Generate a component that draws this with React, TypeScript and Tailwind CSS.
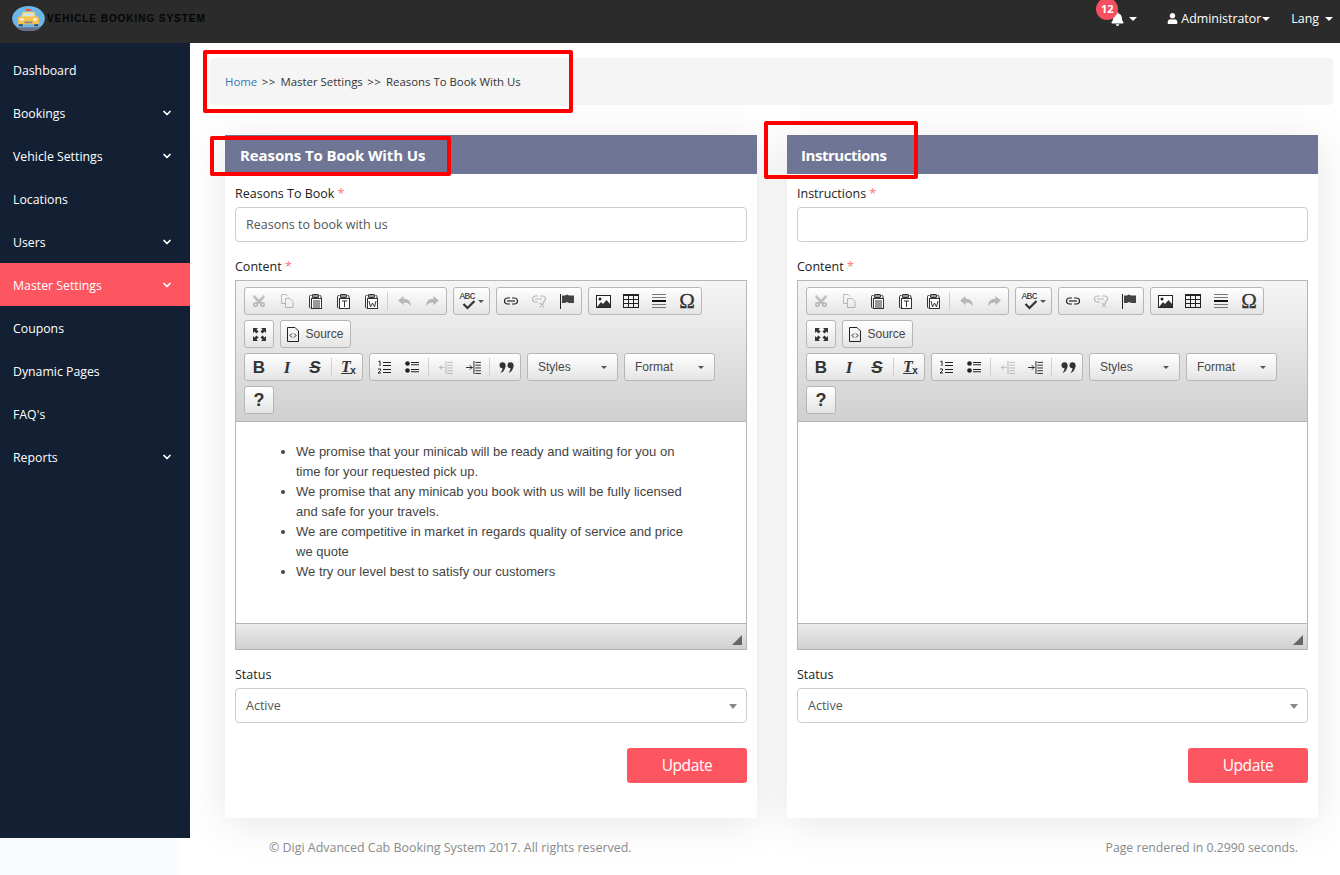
import { ChevronDown } from 'lucide-react'
import { FaBell, FaUser, FaCut } from 'react-icons/fa'
import React from 'react'

const menu = [
  { name: 'Dashboard' },
  { name: 'Bookings', sub: true },
  { name: 'Vehicle Settings', sub: true },
  { name: 'Locations' },
  { name: 'Users', sub: true },
  { name: 'Master Settings', sub: true, active: true },
  { name: 'Coupons' },
  { name: 'Dynamic Pages' },
  { name: "FAQ's" },
  { name: 'Reports', sub: true },
]

function Caret() {
  return <span className="inline-block w-0 h-0 border-x-[4px] border-x-transparent border-t-[4px] border-t-white" />
}

function TaxiLogo() {
  return (
    <svg width="33" height="25" viewBox="0 0 34 26">
      <ellipse cx="17" cy="13" rx="17" ry="13" fill="#6db7e8" />
      <path d="M4 22 a17 13 0 0 0 26 0 z" fill="#6b6f8c" />
      <rect x="14" y="3" width="6" height="2" fill="#e2574c" />
      <path d="M9 12 L11 6 H23 L25 12 Z" fill="#f8d26a" />
      <path d="M11 11 L12.5 7.5 H21.5 L23 11 Z" fill="#cfe6f2" />
      <rect x="6" y="11" width="22" height="8" rx="2" fill="#f6c350" />
      <rect x="8" y="13" width="4" height="2" fill="#fff" />
      <rect x="22" y="13" width="4" height="2" fill="#fff" />
      <rect x="13" y="16" width="8" height="2" fill="#8a8a8a" />
      <rect x="7" y="19" width="4" height="2" fill="#444" />
      <rect x="23" y="19" width="4" height="2" fill="#444" />
    </svg>
  )
}

function Header() {
  return (
    <header className="h-[43px] bg-[#2b2b2b] flex items-center text-white text-[12.4px]">
      <div className="ml-[12px] -mt-[6px] flex items-center">
        <TaxiLogo />
        <span className="ml-[2px] font-['Liberation_Sans',sans-serif] font-bold text-[10px] tracking-[0.95px] text-[#050505]">
          VEHICLE BOOKING SYSTEM
        </span>
      </div>
      <div className="ml-auto flex items-center -mt-[5px]">
        <div className="relative flex items-center gap-[5px] mr-[30px]">
          <FaBell className="w-[13px] h-[14px] mt-[1px] text-white" />
          <Caret />
          <span className="absolute -left-[15px] -top-[13px] w-[22px] h-[22px] rounded-full bg-[#f4505f] text-white text-[11px] font-bold flex items-center justify-center">
            12
          </span>
        </div>
        <FaUser className="w-[11px] h-[11px] mr-[3px]" />
        <span>Administrator</span>
        <span className="ml-[1px] mr-[21px] flex"><Caret /></span>
        <span>Lang</span>
        <span className="ml-[6px] mr-[7px] flex"><Caret /></span>
      </div>
    </header>
  )
}

function Sidebar() {
  return (
    <div className="w-[190px] shrink-0">
      <aside className="h-[795px] bg-[#131f33] text-white text-[12.3px] pt-[5px]">
        {menu.map((m) => (
          <div key={m.name} className={`h-[43px] flex items-center pl-[13px] pr-[17px] pt-[4px] justify-between ${m.active ? 'bg-[#fd5660]' : ''}`}>
            <span>{m.name}</span>
            {m.sub && <ChevronDown className="w-[12px] h-[12px] -mt-[3px]" strokeWidth={3.5} />}
          </div>
        ))}
      </aside>
      <div className="w-[180px] h-[37px] bg-[#fafbff]" />
    </div>
  )
}

const G = 'flex items-center h-[28px] border border-[#b6b6b6] rounded-[3px] bg-gradient-to-b from-white to-[#e4e4e4]'

function Btn({ children, dim }: { children: React.ReactNode; dim?: boolean }) {
  return <span className={`w-[28px] h-[26px] flex items-center justify-center text-[#474747] ${dim ? 'opacity-30' : ''}`}>{children}</span>
}

function Sep() {
  return <span className="w-px h-[18px] mx-[2px] bg-[#cfcfcf]" />
}

function Clip({ letter }: { letter: 'lines' | 'T' | 'W' }) {
  return (
    <svg width="13" height="15" viewBox="0 0 13 15" fill="none" stroke="#333" strokeWidth="1">
      <path d="M2.5 1.5 H1.5 a1 1 0 0 0 -1 1 V13 a1 1 0 0 0 1 1 M10.5 1.5 H11 a1 1 0 0 1 1 1 V4" />
      <rect x="3.5" y=".5" width="6" height="3" rx=".5" fill="#999" />
      <rect x="2.5" y="4.5" width="10" height="10" fill="#fff" />
      {letter === 'lines' && <path d="M4 7 H11 M4 9 H11 M4 11 H11 M4 13 H11" />}
      {letter === 'T' && <path d="M5 7 H10 M7.5 7 V13" />}
      {letter === 'W' && <path d="M4 7 L5.5 13 L7.5 9 L9.5 13 L11 7" />}
    </svg>
  )
}

function Toolbar() {
  return (
    <div className="bg-gradient-to-b from-[#f5f5f5] to-[#cfd1cf] h-[141px] border-b border-[#b6b6b6] pl-[8px] pt-[6px] flex flex-col gap-[5px]">
      <div className="flex gap-[6px]">
        <div className={`${G} w-[203px]`}>
          <Btn dim><FaCut className="w-[14px] h-[14px] -rotate-90" /></Btn>
          <Btn dim>
            <svg width="14" height="16" viewBox="0 0 14 16" fill="none" stroke="#333"><path d="M1.5 1.5 H6 L8 3.5 M1.5 1.5 V10.5 H5" /><path d="M5.5 5.5 H10 L13 8.5 V14.5 H5.5 Z" /></svg>
          </Btn>
          <Btn><Clip letter="lines" /></Btn>
          <Btn><Clip letter="T" /></Btn>
          <Btn><Clip letter="W" /></Btn>
          <Sep />
          <Btn dim>
            <svg width="15" height="11" viewBox="0 0 16 12" fill="#333"><path d="M1 5 L7 0 V3 C12 3 15 6 15 11 C13 8 11 7 7 7 V10 Z" /></svg>
          </Btn>
          <Btn dim>
            <svg width="15" height="11" viewBox="0 0 16 12" fill="#333"><path d="M15 5 L9 0 V3 C4 3 1 6 1 11 C3 8 5 7 9 7 V10 Z" /></svg>
          </Btn>
        </div>
        <div className={`${G} w-[37px] justify-center gap-[2px]`}>
          <span className="relative w-[16px] h-[18px] block">
            <span className="absolute left-0 -top-[2px] text-[9.5px] font-['Liberation_Mono',monospace] text-[#222] tracking-[-0.6px]">ABC</span>
            <svg className="absolute left-[2px] top-[8px]" width="14" height="10" viewBox="0 0 14 10" fill="none" stroke="#333" strokeWidth="2.2"><path d="M1.5 4 L5.5 8 L12.5 1" /></svg>
          </span>
          <span className="w-0 h-0 border-x-[3px] border-x-transparent border-t-[3px] border-t-[#555]" />
        </div>
        <div className={`${G} w-[86px]`}>
          <Btn>
            <svg width="14" height="8" viewBox="0 0 14 8" fill="none" stroke="#222" strokeWidth="1.2"><path d="M6 1 H3.5 a3 3 0 0 0 0 6 H6 M8 1 H10.5 a3 3 0 0 1 0 6 H8" /><path d="M3 4 H11" /></svg>
          </Btn>
          <Btn dim>
            <svg width="15" height="13" viewBox="0 0 15 13" fill="none" stroke="#333" strokeWidth="1.2"><path d="M6 1 H3.5 a3 3 0 0 0 0 6 H6 M8 1 H10.5 a3 3 0 0 1 0 6 M3 4 H10 M8 8 L12 12 M12 8 L8 12" /></svg>
          </Btn>
          <Btn>
            <svg width="14" height="15" viewBox="0 0 14 15"><path d="M.5 0 V15" stroke="#222" /><path d="M2 1.5 H5 L7 .5 L9 1.5 H14 V9 H9 L7 8 L5 9 H2 Z" fill="#444" /></svg>
          </Btn>
        </div>
        <div className={`${G} w-[114px]`}>
          <Btn>
            <svg width="15" height="13" viewBox="0 0 15 13"><rect x=".5" y=".5" width="14" height="12" fill="#fff" stroke="#222" /><circle cx="4" cy="4" r="1.5" fill="#222" /><path d="M1 12 L5 7 L7 9 L10.5 5 L14 9 V12 Z" fill="#333" /></svg>
          </Btn>
          <Btn>
            <svg width="16" height="14" viewBox="0 0 16 14" fill="none" stroke="#222"><rect x=".5" y=".5" width="15" height="13" /><path d="M.5 1.5 H15.5 M.5 5.5 H15.5 M.5 9.5 H15.5 M5.5 2 V14 M10.5 2 V14" /></svg>
          </Btn>
          <Btn>
            <svg width="14" height="16" viewBox="0 0 14 16" stroke="#777"><path d="M0 1.5 H14 M0 4.5 H14 M0 11.5 H14 M0 14.5 H14" /><path d="M0 8 H14" stroke="#111" strokeWidth="2" /></svg>
          </Btn>
          <Btn><span className="text-[21px] leading-none font-['Liberation_Serif',serif] text-[#333] [-webkit-text-stroke:0.3px_#333]">Ω</span></Btn>
        </div>
      </div>
      <div className="flex gap-[6px]">
        <div className={`${G} w-[30px] justify-center`}>
          <svg width="15" height="15" viewBox="0 0 15 15" fill="#333"><path d="M1 1 H6 L4.5 2.5 L6.5 4.5 L4.5 6.5 L2.5 4.5 L1 6 Z M14 1 V6 L12.5 4.5 L10.5 6.5 L8.5 4.5 L10.5 2.5 L9 1 Z M1 14 V9 L2.5 10.5 L4.5 8.5 L6.5 10.5 L4.5 12.5 L6 14 Z M14 14 H9 L10.5 12.5 L8.5 10.5 L10.5 8.5 L12.5 10.5 L14 9 Z" /></svg>
        </div>
        <div className={`${G} w-[71px] justify-center gap-[6px]`}>
          <svg width="12" height="15" viewBox="0 0 12 15" fill="none" stroke="#222"><path d="M.5 .5 H8 L11.5 4 V14.5 H.5 Z" /><path d="M5 6.5 L3 8.5 L5 10.5 M7 6.5 L9 8.5 L7 10.5" /></svg>
          <span className="text-[12px] text-[#474747] font-['Liberation_Sans',sans-serif]">Source</span>
        </div>
      </div>
      <div className="flex gap-[6px]">
        <div className={`${G} w-[119px]`}>
          <Btn><span className="text-[17px] leading-none font-bold font-['Liberation_Sans',sans-serif] text-[#333]">B</span></Btn>
          <Btn><span className="text-[17px] leading-none italic font-bold font-['Liberation_Serif',serif] text-[#333]">I</span></Btn>
          <Btn><span className="text-[17px] leading-none italic font-bold line-through font-['Liberation_Sans',sans-serif] text-[#333]">S</span></Btn>
          <Sep />
          <Btn>
            <span className="relative -ml-[4px] text-[16px] leading-none italic font-bold font-['Liberation_Serif',serif] text-[#333] underline">T<span className="absolute -right-[5px] -bottom-[1px] text-[10px] not-italic font-['Liberation_Sans',sans-serif] inline-block">x</span></span>
          </Btn>
        </div>
        <div className={`${G} w-[152px]`}>
          <Btn>
            <svg width="14" height="14" viewBox="0 0 14 14" stroke="#222"><path d="M6 2.5 H14 M6 5.5 H14 M6 9.5 H14 M6 12.5 H14" /><path d="M1.5 1.5 L3 1 V6 M1 9 H3.5 V10.5 L1 13 H4" fill="none" /></svg>
          </Btn>
          <Btn>
            <svg width="14" height="12" viewBox="0 0 14 12" fill="#222"><circle cx="2.5" cy="2.5" r="2.3" /><circle cx="2.5" cy="9.5" r="2.3" /><path d="M6 1 H14 V2 H6 Z M6 3.2 H14 V4.2 H6 Z M6 8 H14 V9 H6 Z M6 10.2 H14 V11.2 H6 Z" /></svg>
          </Btn>
          <Sep />
          <Btn dim>
            <svg width="15" height="13" viewBox="0 0 16 14" stroke="#333"><path d="M8.5 0 V14 M10 1.5 H16 M10 4.5 H16 M10 7.5 H16 M10 10.5 H16 M10 13.5 H16 M1 7 H7 M4 4.5 L1.5 7 L4 9.5" fill="none" /></svg>
          </Btn>
          <Btn>
            <svg width="15" height="13" viewBox="0 0 16 14" stroke="#222"><path d="M8.5 0 V14 M10 1.5 H16 M10 4.5 H16 M10 7.5 H16 M10 10.5 H16 M10 13.5 H16 M0 7 H7 M4 4.5 L6.5 7 L4 9.5" fill="none" /></svg>
          </Btn>
          <Sep />
          <Btn>
            <svg width="15" height="11" viewBox="0 0 15 11" fill="#333"><circle cx="3.5" cy="3.2" r="3" /><path d="M6.5 3.2 C6.5 7 4.5 10 1.5 11 C3 9 3.5 7.5 3.5 6 Z" /><circle cx="11.5" cy="3.2" r="3" /><path d="M14.5 3.2 C14.5 7 12.5 10 9.5 11 C11 9 11.5 7.5 11.5 6 Z" /></svg>
          </Btn>
        </div>
        <div className={`${G} w-[91px] px-[10px] justify-between font-['Liberation_Sans',sans-serif] text-[12px] text-[#484848]`}>
          Styles
          <span className="w-0 h-0 border-x-[3px] border-x-transparent border-t-[3px] border-t-[#555]" />
        </div>
        <div className={`${G} w-[91px] px-[10px] justify-between font-['Liberation_Sans',sans-serif] text-[12px] text-[#484848]`}>
          Format
          <span className="w-0 h-0 border-x-[3px] border-x-transparent border-t-[3px] border-t-[#555]" />
        </div>
      </div>
      <div className="flex">
        <div className={`${G} w-[30px] justify-center`}>
          <span className="text-[18px] leading-none font-bold font-['Liberation_Sans',sans-serif] text-[#333]">?</span>
        </div>
      </div>
    </div>
  )
}

function Editor({ children }: { children?: React.ReactNode }) {
  return (
    <div className="border border-[#b6b6b6] h-[370px] flex flex-col">
      <Toolbar />
      <div className="h-[201px] bg-white font-['Liberation_Sans',sans-serif] text-[13px] leading-[20px] text-[#444]">{children}</div>
      <div className="flex-1 border-t border-[#b6b6b6] bg-gradient-to-b from-[#ebebeb] to-[#cfd1cf] relative">
        <span className="absolute right-[4px] bottom-[4px] w-0 h-0 border-l-[10px] border-l-transparent border-b-[10px] border-b-[#666]" />
      </div>
    </div>
  )
}

function Card({ title, titleClass, label, value, width, children }: { title: string; titleClass: string; label: string; value?: string; width: string; children?: React.ReactNode }) {
  return (
    <section className={`${width} h-[683px] bg-white shadow-[0_5px_40px_rgba(0,0,0,0.1)]`}>
      <h2 className={`h-[39px] bg-[#6f7595] text-white text-[15px] font-bold flex items-center pt-[1px] ${titleClass}`}>{title}</h2>
      <div className="px-[10px] text-[12.5px] text-[#222]">
        <label className="block mt-[10px] h-[23px] leading-[19px]">{label} <span className="text-[#f77]">*</span></label>
        <div className="h-[35px] border border-[#ccc] rounded-[4px] flex items-center px-[10px] pt-[2px] text-[#555]">{value}</div>
        <label className="block mt-[15px] h-[23px] leading-[19px]">Content <span className="text-[#f77]">*</span></label>
        <Editor>{children}</Editor>
        <label className="block mt-[15px] h-[23px] leading-[19px]">Status</label>
        <div className="h-[35px] border border-[#ccc] rounded-[4px] flex items-center justify-between pl-[10px] pr-[9px] pt-[1px] text-[#555]">
          Active
          <span className="w-0 h-0 border-x-[4px] border-x-transparent border-t-[5px] border-t-[#888]" />
        </div>
        <div className="flex justify-end mt-[25px]">
          <button className="w-[120px] h-[35px] pt-[1px] bg-[#fd5660] rounded-[3px] text-white text-[15.5px] tracking-[-0.4px]">Update</button>
        </div>
      </div>
    </section>
  )
}

export default function App() {
  return (
    <div className="relative w-[1340px] h-[875px] overflow-hidden bg-white font-['Open_Sans',sans-serif]">
      <Header />
      <div className="flex">
        <Sidebar />
        <main className="flex-1 min-w-0">
          <div className="ml-[20px] mr-[7px] mt-[15px] h-[47px] bg-[#f5f5f5] rounded-[4px] flex items-center gap-[4.5px] pl-[15px] text-[11.4px] text-[#333]">
            <span className="text-[#337ab7]">Home</span>
            <span className="tracking-[0.6px]">&gt;&gt;</span>
            <span>Master Settings</span>
            <span className="tracking-[0.6px]">&gt;&gt;</span>
            <span>Reasons To Book With Us</span>
          </div>
          <div className="flex ml-[35px] mt-[30px] gap-[30px]">
            <Card title="Reasons To Book With Us" titleClass="pl-[15px] tracking-[-0.1px]" label="Reasons To Book" value="Reasons to book with us" width="w-[532px]">
              <ul className="list-disc pl-[60px] pr-[60px] pt-[20px]">
                <li>We promise that your minicab will be ready and waiting for you on time for your requested pick up.</li>
                <li>We promise that any minicab you book with us will be fully licensed and safe for your travels.</li>
                <li>We are competitive in market in regards quality of service and price we quote</li>
                <li>We try our level best to satisfy our customers</li>
              </ul>
            </Card>
            <Card title="Instructions" titleClass="pl-[14px] tracking-[-0.45px]" label="Instructions" width="w-[531px]" />
          </div>
          <div className="flex justify-between ml-[79px] mr-[42px] mt-[21px] text-[#8a8a8a]">
            <span className="text-[12.45px]">© Digi Advanced Cab Booking System 2017. All rights reserved.</span>
            <span className="text-[12.25px]">Page rendered in 0.2990 seconds.</span>
          </div>
        </main>
      </div>
      <div className="absolute left-[203px] top-[50px] w-[370px] h-[63px] border-[4px] border-[#f00] rounded-[2px]" />
      <div className="absolute left-[210px] top-[136px] w-[241px] h-[40px] border-[4px] border-[#f00] rounded-[2px]" />
      <div className="absolute left-[764px] top-[121px] w-[154px] h-[58px] border-[4px] border-[#f00] rounded-[2px]" />
    </div>
  )
}
